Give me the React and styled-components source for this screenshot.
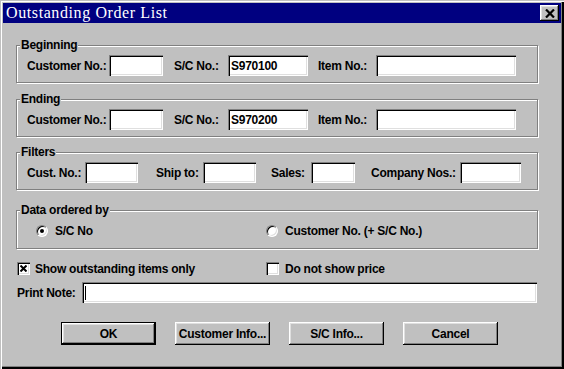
import styled, { createGlobalStyle } from 'styled-components';

const GlobalStyle = createGlobalStyle`
  html, body {
    margin: 0;
    padding: 0;
    background: #c0c0c0;
  }
  body {
    font-family: "Liberation Sans", Arial, sans-serif;
    font-size: 12px;
    font-weight: bold;
    letter-spacing: -0.25px;
    color: #000;
  }
`;

const Window = styled.div`
  width: 564px;
  height: 369px;
  box-sizing: border-box;
  padding: 3px;
  background: #c0c0c0;
  overflow: hidden;
  box-shadow: inset 1px 1px 0 #c0c0c0, inset 2px 2px 0 #fff,
    inset -2px -2px 0 #000, inset -3px -3px 0 #808080;
`;

const TitleBar = styled.div`
  height: 20px;
  background: #000080;
  display: flex;
  align-items: center;
  justify-content: space-between;
  padding: 0 2px 0 3px;
`;

const TitleText = styled.span`
  color: #fff;
  font-family: "Liberation Serif", "Times New Roman", serif;
  font-size: 16px;
  font-weight: normal;
  letter-spacing: 0.6px;
`;

const CloseButton = styled.div`
  width: 19px;
  height: 16px;
  box-sizing: border-box;
  background: #c0c0c0;
  display: flex;
  align-items: center;
  justify-content: center;
  box-shadow: inset -1px -1px 0 #000, inset 1px 1px 0 #fff,
    inset -2px -2px 0 #808080, inset 2px 2px 0 #dfdfdf;
`;

const Body = styled.div`
  padding: 15px 0 0 13px;
`;

const Group = styled.fieldset`
  width: 522px;
  box-sizing: border-box;
  margin: ${p => p.$mt || 0}px 0 0;
  padding: 3px 0 ${p => p.$pb || 6}px 3px;
  border: 1px solid #808080;
  box-shadow: 1px 1px 0 #fff, inset 1px 1px 0 #fff;
  min-width: 0;
`;

const Legend = styled.legend`
  padding: 0 1px;
  margin-left: 0;
  line-height: 14px;
  background: #c0c0c0;
`;

const Row = styled.div`
  display: flex;
  align-items: center;
  height: ${p => p.$h || 21}px;
  margin-top: ${p => p.$mt || 0}px;
  padding-left: ${p => p.$pl || 0}px;
`;

const Label = styled.span`
  flex: none;
  width: ${p => p.$w}px;
  margin-left: ${p => p.$ml || 0}px;
  white-space: nowrap;
`;

const TextBox = styled.div`
  flex: none;
  width: ${p => p.$w}px;
  height: 21px;
  box-sizing: border-box;
  padding: 0 3px;
  background: #fff;
  display: flex;
  align-items: center;
  white-space: nowrap;
  box-shadow: inset 1px 1px 0 #808080, inset 2px 2px 0 #000,
    inset -1px -1px 0 #fff, inset -2px -2px 0 #dfdfdf;
`;

const Caret = styled.span`
  width: 1px;
  height: 14px;
  background: #000;
`;

const Option = styled.div`
  flex: none;
  width: ${p => p.$w || 'auto'};
  display: flex;
  align-items: center;
  gap: ${p => p.$gap || 7}px;
  white-space: nowrap;
`;

const RadioCircle = styled.span`
  flex: none;
  width: 12px;
  height: 12px;
  box-sizing: border-box;
  border-radius: 50%;
  border: 1px solid;
  border-color: #808080 #fff #fff #808080;
  background: #fff;
  box-shadow: inset 1px 1px 0 #000, inset -1px -1px 0 #dfdfdf;
  display: flex;
  align-items: center;
  justify-content: center;
`;

const RadioDot = styled.span`
  width: 4px;
  height: 4px;
  border-radius: 50%;
  background: #000;
`;

const CheckBox = styled.span`
  flex: none;
  width: 13px;
  height: 13px;
  box-sizing: border-box;
  background: #fff;
  display: flex;
  align-items: center;
  justify-content: center;
  box-shadow: inset 1px 1px 0 #808080, inset 2px 2px 0 #000,
    inset -1px -1px 0 #fff, inset -2px -2px 0 #dfdfdf;
`;

const ButtonRow = styled.div`
  display: flex;
  gap: 19px;
  margin-top: 19px;
  padding-left: 45px;
`;

const Button = styled.button`
  width: 95px;
  height: 23px;
  padding: 0;
  border: none;
  background: #c0c0c0;
  font: inherit;
  letter-spacing: inherit;
  color: #000;
  box-shadow: ${p =>
    p.$default
      ? 'inset 0 0 0 1px #000, inset -2px -2px 0 #000, inset 2px 2px 0 #fff, inset -3px -3px 0 #808080, inset 3px 3px 0 #dfdfdf'
      : 'inset -1px -1px 0 #000, inset 1px 1px 0 #fff, inset -2px -2px 0 #808080, inset 2px 2px 0 #dfdfdf'};
`;

function Radio({ checked, label, w }) {
  return (
    <Option $w={w}>
      <RadioCircle>{checked && <RadioDot />}</RadioCircle>
      {label}
    </Option>
  );
}

function Check({ checked, label, w, gap }) {
  return (
    <Option $w={w} $gap={gap}>
      <CheckBox>
        {checked && (
          <svg width="7" height="7" viewBox="0 0 7 7">
            <path d="M0.5 0.5 L6.5 6.5 M6.5 0.5 L0.5 6.5" stroke="#000" strokeWidth="2" />
          </svg>
        )}
      </CheckBox>
      {label}
    </Option>
  );
}

function RangeGroup({ title, mt, sc }) {
  return (
    <Group $mt={mt}>
      <Legend>{title}</Legend>
      <Row $pl={7}>
        <Label $w={82}>Customer No.:</Label>
        <TextBox $w={54} />
        <Label $w={54} $ml={11}>S/C No.:</Label>
        <TextBox $w={80}>{sc}</TextBox>
        <Label $w={58} $ml={10}>Item No.:</Label>
        <TextBox $w={140} />
      </Row>
    </Group>
  );
}

export default function App() {
  return (
    <Window>
      <GlobalStyle />
      <TitleBar>
        <TitleText>Outstanding Order List</TitleText>
        <CloseButton>
          <svg width="10" height="9" viewBox="0 0 10 9">
            <path d="M1 0.5 L9 8.5 M9 0.5 L1 8.5" stroke="#000" strokeWidth="2.2" />
          </svg>
        </CloseButton>
      </TitleBar>
      <Body>
        <RangeGroup title="Beginning" sc="S970100" />
        <RangeGroup title="Ending" mt={9} sc="S970200" />
        <Group $mt={8}>
          <Legend>Filters</Legend>
          <Row $pl={7}>
            <Label $w={58}>Cust. No.:</Label>
            <TextBox $w={53} />
            <Label $w={47} $ml={18}>Ship to:</Label>
            <TextBox $w={53} />
            <Label $w={40} $ml={15}>Sales:</Label>
            <TextBox $w={44} />
            <Label $w={89} $ml={16}>Company Nos.:</Label>
            <TextBox $w={61} />
          </Row>
        </Group>
        <Group $mt={13} $pb={7}>
          <Legend>Data ordered by</Legend>
          <Row $pl={16}>
            <Radio checked w="230px" label="S/C No" />
            <Radio label="Customer No. (+ S/C No.)" />
          </Row>
        </Group>
        <Row $h={15} $mt={12} $pl={1}>
          <Check checked w="249px" gap={5} label="Show outstanding items only" />
          <Check gap={6} label="Do not show price" />
        </Row>
        <Row $mt={6} $pl={1}>
          <Label $w={65}>Print Note:</Label>
          <TextBox $w={455}>
            <Caret />
          </TextBox>
        </Row>
        <ButtonRow>
          <Button $default>OK</Button>
          <Button>Customer Info...</Button>
          <Button>S/C Info...</Button>
          <Button>Cancel</Button>
        </ButtonRow>
      </Body>
    </Window>
  );
}
